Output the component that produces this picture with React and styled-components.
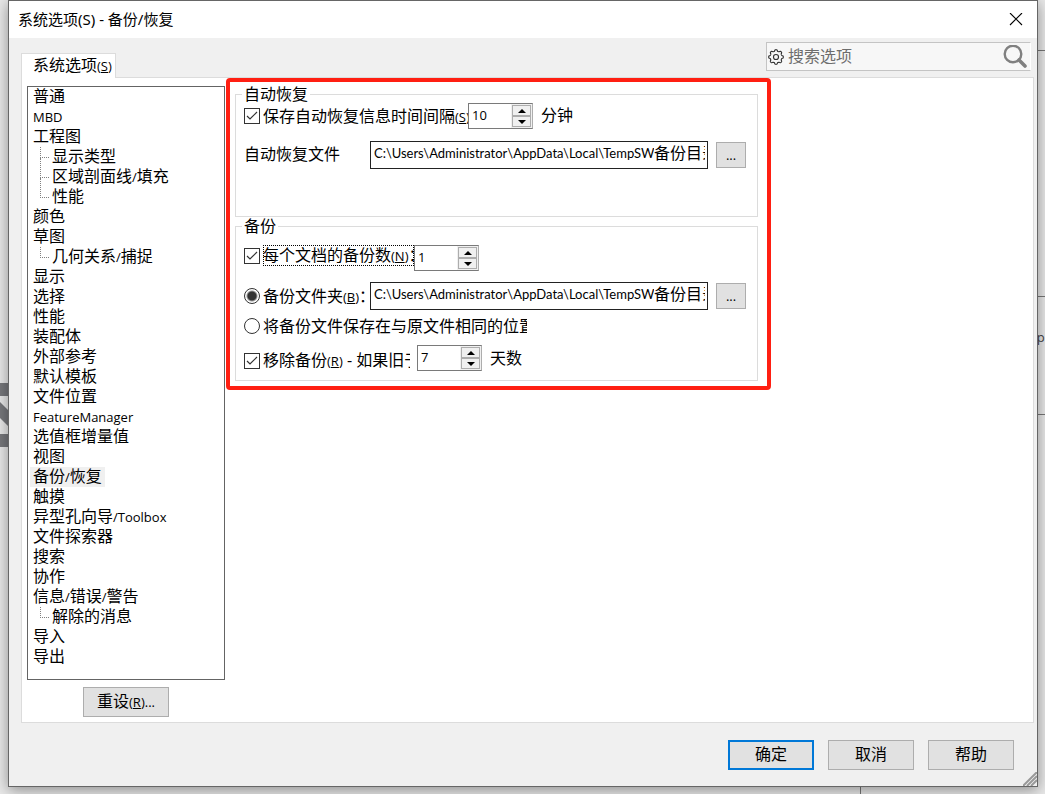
import React, { useState } from "react";
import styled, { createGlobalStyle } from "styled-components";

const GlobalStyle = createGlobalStyle`
  * {
    box-sizing: border-box;
  }

  body {
    margin: 0;
    background: #e9e9e9;
    color: #000;
    font-family: "Open Sans", "Noto Sans CJK SC", sans-serif;
    font-size: 16px;
    line-height: 20px;
  }

  button,
  input {
    font-family: inherit;
    font-size: inherit;
    color: inherit;
  }
`;

const Desktop = styled.div`
  position: relative;
  overflow: hidden;
  min-height: 100vh;
  padding: 0 7px 7px 8px;
`;

const Backdrop = styled.svg`
  position: absolute;
  top: 0;
  ${({ $side }) => $side}: 0;
`;

const BackdropText = styled.span`
  position: absolute;
  top: 327px;
  right: -3px;
  font-size: 13px;
  color: #444;
`;

const Dialog = styled.main`
  position: relative;
  border: 1px solid #666;
  background: #f0f0f0;
  box-shadow: 0 3px 14px rgba(0, 0, 0, 0.4);
`;

const TitleBar = styled.header`
  display: flex;
  align-items: center;
  justify-content: space-between;
  height: 37px;
  padding: 0 9px;
  background: #fff;
`;

const Title = styled.h1`
  margin: 0;
  padding-bottom: 2px;
  font-family: "Noto Sans", "Noto Sans CJK SC", sans-serif;
  font-size: 15px;
  font-weight: 400;
`;

const CloseButton = styled.button`
  display: flex;
  padding: 5px;
  border: 0;
  background: none;
`;

const TabBar = styled.div`
  display: flex;
  align-items: flex-end;
  justify-content: space-between;
  height: 39px;
  padding: 0 6px 0 12px;
`;

const Tab = styled.button`
  position: relative;
  z-index: 1;
  height: 25px;
  margin-bottom: -1px;
  padding: 0 3px 2px 11px;
  border: 1px solid #dcdcdc;
  border-bottom: 0;
  background: #fff;
  line-height: 20px;
`;

const SearchBox = styled.label`
  display: flex;
  align-items: center;
  align-self: flex-start;
  width: 265px;
  height: 29px;
  margin-top: 4px;
  padding: 0 3px 0 1px;
  border: 1px solid #c4c4c4;
  border-right-color: #fff;
  background: #f7f7f7;
`;

const SearchInput = styled.input`
  flex: 1;
  min-width: 0;
  padding: 0 4px 2px;
  border: 0;
  outline: 0;
  background: none;

  &::placeholder {
    color: #6d6d6d;
    opacity: 1;
  }
`;

const Panel = styled.section`
  display: flex;
  align-items: flex-start;
  gap: 1px;
  margin: 0 3px 0 12px;
  padding-left: 5px;
  border: 1px solid #dcdcdc;
  background: #fff;
`;

const Sidebar = styled.nav`
  display: flex;
  flex-direction: column;
  align-items: center;
  gap: 7px;
  flex: 0 0 198px;
  padding: 8px 0 5px;
`;

const List = styled.ul`
  width: 100%;
  margin: 0;
  padding: 0 0 12px 2px;
  border: 1px solid #646464;
  list-style: none;
`;

const Item = styled.li`
  display: flex;
  height: 20px;
  padding-left: ${({ $child }) => ($child ? "10px" : "0")};
  line-height: 18px;
`;

const ItemText = styled.span`
  padding: 0 3px;
  white-space: nowrap;
  background: ${({ $selected }) => ($selected ? "#f0f0f0" : "none")};
`;

const Branch = styled.span`
  width: 9px;
  height: ${({ $last }) => ($last ? "10px" : "20px")};

  &::before {
    content: "";
    display: block;
    height: 10px;
    border-left: 1px dotted #808080;
    border-bottom: 1px dotted #808080;
  }

  &::after {
    content: "";
    display: ${({ $last }) => ($last ? "none" : "block")};
    height: 10px;
    border-left: 1px dotted #808080;
  }
`;

const Small = styled.span`
  font-size: 13px;
`;

const Button = styled.button`
  width: 86px;
  height: 30px;
  padding: 0 0 2px;
  border: ${({ $primary }) => ($primary ? "2px solid #0078d7" : "1px solid #adadad")};
  background: #e1e1e1;
  line-height: 20px;
`;

const BrowseButton = styled(Button)`
  width: 30px;
  height: 26px;
  margin-left: 8px;
  padding: 0;
  font-size: 13px;
`;

const Highlight = styled.div`
  flex: 0 1 545px;
  min-width: 0;
  padding: 3px 9px 5px 5px;
  border: 4px solid #ff1f12;
  border-radius: 4px;
`;

const Group = styled.fieldset`
  min-width: 0;
  margin: 0;
  padding: ${({ $pad }) => $pad};
  border: 1px solid #dcdcdc;
`;

const Legend = styled.legend`
  margin-left: -2px;
  padding: 0 2px;
  line-height: 18px;
`;

const Row = styled.div`
  display: flex;
  align-items: ${({ $align }) => $align || "center"};
  height: ${({ $height }) => $height || 26}px;
  margin-top: ${({ $top }) => $top || 0}px;
`;

const Option = styled.label`
  display: flex;
  align-items: center;
  flex: 0 0 ${({ $width }) => $width}px;
  gap: 3px;
  overflow: hidden;
  white-space: nowrap;
`;

const OptionText = styled.span`
  flex: 1;
  overflow: hidden;
  line-height: 20px;
  outline: ${({ $focused }) => ($focused ? "1px dotted #000" : "none")};
  outline-offset: -1px;
`;

const Check = styled.input`
  appearance: none;
  flex: none;
  width: 16px;
  height: 16px;
  margin: 0;
  border: 1px solid #333;
  background: #fff;

  &:checked {
    background: url("data:image/svg+xml,%3Csvg xmlns='http://www.w3.org/2000/svg' viewBox='0 0 14 14'%3E%3Cpath d='M2 7l3 3 7-7' fill='none' stroke='%23333' stroke-width='1.2'/%3E%3C/svg%3E");
  }
`;

const Radio = styled(Check)`
  border-radius: 50%;

  &:checked {
    background: radial-gradient(circle, #333 4px, #fff 6px);
  }
`;

const FieldLabel = styled.label`
  flex: 0 0 126px;
  padding-bottom: 2px;
`;

const PathBox = styled.div`
  display: flex;
  flex: 0 1 338px;
  min-width: 0;
  height: 28px;
  padding: 0 2px 0 3px;
  border: 1px solid #222;
  line-height: 22px;
  white-space: nowrap;
`;

const PathInput = styled.input`
  flex: 0 0 280px;
  width: 280px;
  height: 22px;
  padding: 0;
  border: 0;
  outline: 0;
  background: none;
  font-family: Lato, "Noto Sans CJK SC", sans-serif;
  font-size: 13px;
`;

const PathTail = styled.span`
  overflow: hidden;
`;

const SpinBox = styled.div`
  display: flex;
  width: 65px;
  height: 26px;
  margin-left: ${({ $left }) => $left || 0}px;
  border: 1px solid #7a7a7a;
  border-right-color: #adadad;
  background: #fff;
`;

const SpinInput = styled.input`
  flex: 1;
  min-width: 0;
  height: 22px;
  padding: 0 0 0 3px;
  border: 0;
  outline: 0;
  background: none;
  font-size: 13px;
`;

const SpinButtons = styled.div`
  display: flex;
  flex-direction: column;
  width: 21px;
  padding: 1px;
  background: #f0f0f0;
`;

const SpinButton = styled.button`
  display: flex;
  align-items: center;
  justify-content: center;
  flex: 1;
  padding: 0;
  border: 1px solid #adadad;
  background: #f0f0f0;
`;

const Unit = styled.span`
  margin-left: 8px;
  padding-bottom: 2px;
  line-height: 22px;
`;

const Footer = styled.footer`
  display: flex;
  justify-content: flex-end;
  gap: 14px;
  padding: 17px 23px 16px;
`;

const Grip = styled.svg`
  position: absolute;
  right: 0;
  bottom: 0;
`;

const pages = [
  { name: "普通" },
  { name: "MBD" },
  { name: "工程图" },
  { name: "显示类型", child: true },
  { name: "区域剖面线/填充", child: true },
  { name: "性能", child: true, last: true },
  { name: "颜色" },
  { name: "草图" },
  { name: "几何关系/捕捉", child: true, last: true },
  { name: "显示" },
  { name: "选择" },
  { name: "性能" },
  { name: "装配体" },
  { name: "外部参考" },
  { name: "默认模板" },
  { name: "文件位置" },
  { name: "FeatureManager" },
  { name: "选值框增量值" },
  { name: "视图" },
  { name: "备份/恢复", selected: true },
  { name: "触摸" },
  { name: "异型孔向导/Toolbox" },
  { name: "文件探索器" },
  { name: "搜索" },
  { name: "协作" },
  { name: "信息/错误/警告" },
  { name: "解除的消息", child: true, last: true },
  { name: "导入" },
  { name: "导出" },
];

// latin runs are set smaller than the chinese around them
const Mixed = ({ text }) =>
  text
    .split(/([\x21-\x7e]+)/)
    .map((part, i) => (i % 2 ? <Small key={i}>{part}</Small> : part));

const Key = ({ letter }) => (
  <Small>
    (<u>{letter}</u>)
  </Small>
);

const Spinner = ({ label, initial, left }) => {
  const [value, setValue] = useState(initial);
  return (
    <SpinBox $left={left}>
      <SpinInput
        aria-label={label}
        value={value}
        onChange={(e) => setValue(Number(e.target.value) || 0)}
      />
      <SpinButtons>
        <SpinButton aria-label="增加" onClick={() => setValue(value + 1)}>
          <svg width="8" height="4">
            <path d="M0 4L4 0l4 4z" />
          </svg>
        </SpinButton>
        <SpinButton aria-label="减少" onClick={() => setValue(value - 1)}>
          <svg width="8" height="4">
            <path d="M0 0l4 4 4-4z" />
          </svg>
        </SpinButton>
      </SpinButtons>
    </SpinBox>
  );
};

const Path = ({ id, label }) => (
  <>
    <PathBox>
      <PathInput
        id={id}
        aria-label={label}
        defaultValue="C:\Users\Administrator\AppData\Local\TempSW"
      />
      <PathTail>备份目录</PathTail>
    </PathBox>
    <BrowseButton aria-label="浏览">...</BrowseButton>
  </>
);

// eight rounded teeth around the rim
const gearPoints = Array.from({ length: 96 }, (_, i) => {
  const angle = (i / 96) * Math.PI * 2;
  const r = 7 + 0.8 * Math.tanh(2 * Math.cos(8 * angle));
  return `${(8 + r * Math.cos(angle)).toFixed(2)},${(8 + r * Math.sin(angle)).toFixed(2)}`;
}).join(" ");

const GearIcon = () => (
  <svg width="16" height="16" viewBox="-0.5 -0.5 17 17" fill="none" stroke="#333">
    <polygon points={gearPoints} strokeWidth="1.2" strokeLinejoin="round" />
    <circle cx="8" cy="8" r="2.7" strokeWidth="1.2" />
  </svg>
);

const App = () => {
  const [target, setTarget] = useState("folder");

  return (
    <>
      <GlobalStyle />
      <Desktop>
        <Backdrop $side="left" width="8" height="794">
          <path d="M0 383h8v13H0zM0 434h8v13H0zM0 402l8 8v16L0 418z" fill="#77787c" />
        </Backdrop>
        <Backdrop $side="right" width="185" height="794">
          <path d="M177 50.5h8M177 296.5h8M177 414.5h8M.5 787v7" stroke="#777" />
        </Backdrop>
        <BackdropText>pl</BackdropText>
        <Dialog>
          <TitleBar>
            <Title>系统选项(S) - 备份/恢复</Title>
            <CloseButton aria-label="关闭">
              <svg width="14" height="14" viewBox="0 0 14 14">
                <path d="M1 0l12 12M13 0L1 12" stroke="#000" strokeWidth="1.1" />
              </svg>
            </CloseButton>
          </TitleBar>
          <TabBar>
            <Tab>
              系统选项
              <Key letter="S" />
            </Tab>
            <SearchBox>
              <GearIcon />
              <SearchInput placeholder="搜索选项" aria-label="搜索选项" />
              <svg width="24" height="24" viewBox="0 0 24 24" fill="none" stroke="#808080">
                <circle cx="10" cy="9" r="8.3" strokeWidth="2.4" />
                <path d="M16 15l6 6" strokeWidth="3.6" strokeLinecap="round" />
              </svg>
            </SearchBox>
          </TabBar>
          <Panel>
            <Sidebar>
              <List>
                {pages.map(({ name, child, last, selected }, i) => (
                  <Item key={i} $child={child}>
                    {child && <Branch $last={last} />}
                    <ItemText $selected={selected}>
                      <Mixed text={name} />
                    </ItemText>
                  </Item>
                ))}
              </List>
              <Button>
                重设
                <Key letter="R" />
                <Small>...</Small>
              </Button>
            </Sidebar>
            <Highlight>
              <Group $pad="0 8px 47px">
                <Legend>自动恢复</Legend>
                <Row>
                  <Option $width={224}>
                    <Check type="checkbox" defaultChecked />
                    <OptionText>
                      保存自动恢复信息时间间隔
                      <Key letter="S" />
                    </OptionText>
                  </Option>
                  <Spinner label="时间间隔" initial={10} />
                  <Unit>分钟</Unit>
                </Row>
                <Row $top={12} $height={28}>
                  <FieldLabel htmlFor="recover-path">自动恢复文件</FieldLabel>
                  <Path id="recover-path" />
                </Row>
              </Group>
              <Group $pad="10px 8px 9px">
                <Legend>备份</Legend>
                <Row $align="flex-start">
                  <Option $width={170}>
                    <Check type="checkbox" defaultChecked />
                    <OptionText $focused>
                      每个文档的备份数
                      <Key letter="N" />：
                    </OptionText>
                  </Option>
                  <Spinner label="备份数" initial={1} />
                </Row>
                <Row $top={11} $height={28}>
                  <Option $width={126}>
                    <Radio
                      type="radio"
                      name="target"
                      checked={target === "folder"}
                      onChange={() => setTarget("folder")}
                    />
                    <OptionText>
                      备份文件夹
                      <Key letter="B" />：
                    </OptionText>
                  </Option>
                  <Path label="备份文件夹" />
                </Row>
                <Row $top={6} $height={20}>
                  <Option $width={283}>
                    <Radio
                      type="radio"
                      name="target"
                      checked={target === "same"}
                      onChange={() => setTarget("same")}
                    />
                    <OptionText>将备份文件保存在与原文件相同的位置</OptionText>
                  </Option>
                </Row>
                <Row $top={9} $align="flex-end">
                  <Option $width={166}>
                    <Check type="checkbox" defaultChecked />
                    <OptionText>
                      移除备份
                      <Key letter="R" /> - 如果旧于
                    </OptionText>
                  </Option>
                  <Spinner label="天数" initial={7} left={7} />
                  <Unit>天数</Unit>
                </Row>
              </Group>
            </Highlight>
          </Panel>
          <Footer>
            <Button $primary>确定</Button>
            <Button>取消</Button>
            <Button>帮助</Button>
          </Footer>
          <Grip width="14" height="14" viewBox="0 0 14 14">
            <path d="M0 14L14 0M4 14L14 4M8 14l6-6" stroke="#999" strokeWidth="2" />
          </Grip>
        </Dialog>
      </Desktop>
    </>
  );
};

export default App;
